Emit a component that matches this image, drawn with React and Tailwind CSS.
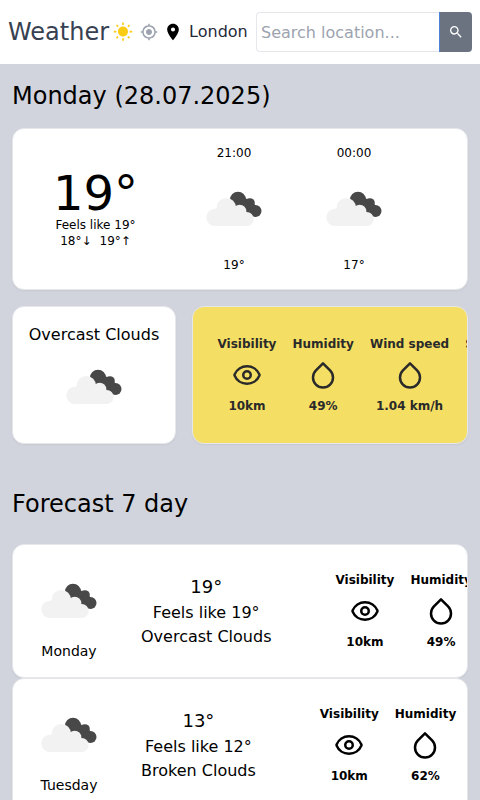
import { MdWbSunny, MdMyLocation, MdLocationOn, MdSearch } from "react-icons/md";
import { LuEye } from "react-icons/lu";
import { FiDroplet, FiSunrise } from "react-icons/fi";

function CloudIcon() {
  return (
    <svg viewBox="0 0 168 105" className="h-[35px] w-14 shrink-0" aria-hidden="true">
      <g fill="#484848">
        <circle cx="96" cy="26" r="24" />
        <circle cx="132" cy="36" r="14.5" />
        <circle cx="148.5" cy="60" r="18" />
        <path d="M86 40L96 4L120 23L132 24L147 42L150 60L138 77L100 62Z" />
      </g>
      <g fill="#f2f2f2">
        <circle cx="27" cy="79" r="26" />
        <circle cx="61" cy="50" r="29" />
        <circle cx="101" cy="61" r="20" />
        <circle cx="122" cy="84" r="21" />
        <path d="M27 54L61 40L86 62L101 55L118 70L122 105H27Z" />
      </g>
    </svg>
  );
}

function Card({ className, children }) {
  return (
    <section className={`flex overflow-hidden rounded-xl border border-gray-200 shadow-[0_1px_2px_rgba(0,0,0,0.05)] ${className}`}>
      {children}
    </section>
  );
}

function Detail({ label, Icon, value }) {
  return (
    <div className="flex shrink-0 flex-col items-center gap-2 text-xs font-semibold whitespace-nowrap">
      <p>{label}</p>
      <Icon size={30} />
      <p>{value}</p>
    </div>
  );
}

function Details({ humidity, wind, sunrise }) {
  return (
    <div className="flex shrink-0 items-center gap-4">
      <Detail label="Visibility" Icon={LuEye} value="10km" />
      <Detail label="Humidity" Icon={FiDroplet} value={humidity} />
      <Detail label="Wind speed" Icon={FiDroplet} value={wind} />
      <Detail label="Sunrise" Icon={FiSunrise} value={sunrise} />
    </div>
  );
}

function HourColumn({ time, temp }) {
  return (
    <div className="flex h-32 w-[120px] shrink-0 flex-col items-center justify-between text-xs">
      <p>{time}</p>
      <div className="pb-0.5">
        <CloudIcon />
      </div>
      <p>{temp}</p>
    </div>
  );
}

function ForecastRow({ day, temp, feels, sky, humidity }) {
  return (
    <Card className="h-[134px] shrink-0 items-center bg-white">
      <div className="flex w-28 shrink-0 flex-col items-center gap-[23px] pt-[21px]">
        <CloudIcon />
        <p className="text-sm">{day}</p>
      </div>
      <div className="mr-16 ml-4 flex shrink-0 flex-col items-center whitespace-nowrap">
        <p className="text-lg">{temp}</p>
        <p>{feels}</p>
        <p>{sky}</p>
      </div>
      <Details humidity={humidity} wind="1.04 km/h" sunrise="5:19" />
    </Card>
  );
}

export default function App() {
  return (
    <div className="flex h-[800px] flex-col overflow-hidden bg-[#d1d4dc] font-['DejaVu_Sans',sans-serif] text-black">
      <nav className="flex h-16 shrink-0 items-center bg-white px-2">
        <h1 className="text-2xl text-[#374151]">Weather</h1>
        <MdWbSunny size={20} className="ml-1 shrink-0 text-[#facc15]" />
        <MdMyLocation size={18} className="ml-[7px] shrink-0 text-[#9ca3af]" />
        <MdLocationOn size={20} className="ml-[5px] shrink-0" />
        <p className="ml-1.5 text-base text-[#1f2937]">London</p>
        <form className="ml-auto flex h-10 w-[216px]">
          <input
            type="text"
            placeholder="Search location..."
            className="w-[183px] rounded-l border border-r-0 border-gray-200 bg-white px-1 pt-0.5 text-base placeholder:text-[#9ca3af]"
          />
          <button type="button" className="flex w-[33px] items-center justify-center rounded-r border-l border-[#4b82d8] bg-[#6b7280] text-white">
            <MdSearch size={16} />
          </button>
        </form>
      </nav>
      <main className="flex flex-col px-3 pt-4">
        <h2 className="text-2xl">Monday (28.07.2025)</h2>
        <Card className="mt-4 h-[162px] items-center bg-white">
          <div className="flex w-[165px] shrink-0 flex-col items-center text-xs">
            <p className="text-5xl leading-none">19°</p>
            <p>Feels like 19°</p>
            <p className="flex gap-2">
              <span>18°↓</span>
              <span>19°↑</span>
            </p>
          </div>
          <div className="-ml-1 flex">
            <HourColumn time="21:00" temp="19°" />
            <HourColumn time="00:00" temp="17°" />
          </div>
        </Card>
        <div className="mt-4 flex h-[138px] gap-4">
          <Card className="w-[164px] shrink-0 flex-col items-center bg-white pt-4">
            <p className="text-base whitespace-nowrap">Overcast Clouds</p>
            <div className="mt-[22px]">
              <CloudIcon />
            </div>
          </Card>
          <Card className="min-w-0 flex-1 items-center bg-[#f4de64] pl-[24.5px] text-[#2a2a2a]">
            <Details humidity="49%" wind="1.04 km/h" sunrise="5:19" />
          </Card>
        </div>
        <h2 className="mt-11 text-2xl">Forecast 7 day</h2>
        <div className="mt-6 flex flex-col">
          <ForecastRow day="Monday" temp="19°" feels="Feels like 19°" sky="Overcast Clouds" humidity="49%" />
          <ForecastRow day="Tuesday" temp="13°" feels="Feels like 12°" sky="Broken Clouds" humidity="62%" />
        </div>
      </main>
    </div>
  );
}
